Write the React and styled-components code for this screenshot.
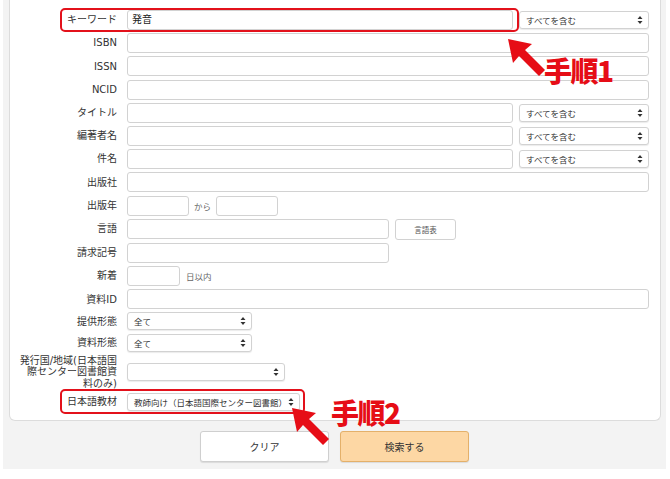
import styled, { createGlobalStyle } from "styled-components";

const GlobalStyle = createGlobalStyle`
  body {
    margin: 0;
    background: #fff;
    font-family: "DejaVu Sans", "Noto Sans CJK JP", sans-serif;
    color: #333;
  }
`;

const Page = styled.div`
  position: relative;
  margin-left: 3px;
  width: 663px;
  height: 469px;
  background: #f3f3f3;
  overflow: hidden;
`;

const Panel = styled.div`
  margin-left: 6px;
  width: 652px;
  box-sizing: border-box;
  background: #fff;
  border: 1px solid #dcdcdc;
  border-top: none;
  border-radius: 0 0 6px 6px;
  padding: 10px 11px 9px 8px;
  display: flex;
  flex-direction: column;
  gap: 3.2px;
`;

const Row = styled.div`
  position: relative;
  display: flex;
  align-items: center;
  gap: 10px;
`;

const Label = styled.div`
  width: 99px;
  flex: none;
  text-align: right;
  font-size: 10px;
  line-height: 11.5px;
  color: #333;
`;

const Controls = styled.div`
  flex: 1;
  display: flex;
  align-items: center;
  gap: ${(p) => p.$gap || 6}px;
`;

const Input = styled.div`
  box-sizing: border-box;
  height: 20px;
  width: ${(p) => (p.$w ? `${p.$w}px` : "auto")};
  flex: ${(p) => (p.$w ? "none" : "1")};
  border: 1px solid #d2d2d2;
  border-radius: 3px;
  background: #fff;
  padding: 0 4px;
  font-size: 10px;
  line-height: 18px;
  color: #222;
`;

const Select = styled.div`
  box-sizing: border-box;
  height: 18px;
  width: ${(p) => p.$w}px;
  flex: none;
  border: 1px solid #d2d2d2;
  border-radius: 3px;
  box-shadow: 0 1px 1px rgba(0, 0, 0, 0.08);
  background: #fff;
  display: flex;
  align-items: center;
  justify-content: space-between;
  padding: 0 5px 0 6px;
  font-size: 8.5px;
  color: #333;
  white-space: nowrap;
`;

const Note = styled.span`
  font-size: 8.5px;
  color: #666;
`;

const SmallButton = styled.div`
  box-sizing: border-box;
  width: 61px;
  height: 21px;
  border: 1px solid #d2d2d2;
  border-radius: 3px;
  background: #fff;
  font-size: 7.5px;
  color: #555;
  display: flex;
  align-items: center;
  justify-content: center;
`;

const Highlight = styled.div`
  position: absolute;
  left: 42px;
  top: ${(p) => p.$top}px;
  bottom: ${(p) => p.$bottom}px;
  width: ${(p) => p.$w}px;
  border: 2px solid #e3111b;
  border-radius: 5px;
  box-sizing: border-box;
  pointer-events: none;
`;

const ButtonBar = styled.div`
  display: flex;
  justify-content: center;
  gap: 11px;
  margin-top: 10px;
`;

const Button = styled.div`
  box-sizing: border-box;
  width: 129px;
  height: 31px;
  border-radius: 3px;
  border: 1px solid ${(p) => (p.$primary ? "#e4b06a" : "#cfcfcf")};
  background: ${(p) => (p.$primary ? "#fdd7a4" : "#fff")};
  box-shadow: 0 1px 1px rgba(0, 0, 0, 0.1);
  font-size: 10px;
  color: #333;
  display: flex;
  align-items: center;
  justify-content: center;
`;

const StepText = styled.div`
  position: absolute;
  left: ${(p) => p.$x}px;
  top: ${(p) => p.$y}px;
  font-family: "Noto Sans CJK JP", sans-serif;
  font-weight: 900;
  font-size: 28px;
  line-height: 30px;
  color: #e60d16;
  letter-spacing: -1.5px;
`;

const ArrowWrap = styled.div`
  position: absolute;
  left: ${(p) => p.$x}px;
  top: ${(p) => p.$y}px;
  width: 40px;
  height: 40px;
`;

const Arrows = () => (
  <svg width="6" height="10" viewBox="0 0 6 10">
    <path d="M3 1 L5.5 4 H0.5 Z M3 9 L5.5 6 H0.5 Z" fill="#333" />
  </svg>
);

const Arrow = ({ x, y }) => (
  <ArrowWrap $x={x} $y={y}>
    <svg width="40" height="40" viewBox="0 0 40 40">
      <polygon
        points="1,1 25,6 18,12 38,32 32,38 12,18 6,25"
        fill="#e60d16"
      />
    </svg>
  </ArrowWrap>
);

const SelectBox = ({ w, children }) => (
  <Select $w={w}>
    <span>{children}</span>
    <Arrows />
  </Select>
);

const App = () => {
  return (
    <>
      <GlobalStyle />
      <Page>
        <Panel>
          <Row>
            <Label>キーワード</Label>
            <Controls>
              <Input>発音</Input>
              <SelectBox w={130}>すべてを含む</SelectBox>
            </Controls>
            <Highlight $top={-2} $bottom={-2} $w={459} />
          </Row>
          <Row>
            <Label>ISBN</Label>
            <Input />
          </Row>
          <Row>
            <Label>ISSN</Label>
            <Input />
          </Row>
          <Row>
            <Label>NCID</Label>
            <Input />
          </Row>
          <Row>
            <Label>タイトル</Label>
            <Controls>
              <Input />
              <SelectBox w={130}>すべてを含む</SelectBox>
            </Controls>
          </Row>
          <Row>
            <Label>編著者名</Label>
            <Controls>
              <Input />
              <SelectBox w={130}>すべてを含む</SelectBox>
            </Controls>
          </Row>
          <Row>
            <Label>件名</Label>
            <Controls>
              <Input />
              <SelectBox w={130}>すべてを含む</SelectBox>
            </Controls>
          </Row>
          <Row>
            <Label>出版社</Label>
            <Input />
          </Row>
          <Row>
            <Label>出版年</Label>
            <Controls $gap={5}>
              <Input $w={62} />
              <Note>から</Note>
              <Input $w={62} />
            </Controls>
          </Row>
          <Row>
            <Label>言語</Label>
            <Controls>
              <Input $w={262} />
              <SmallButton>言語表</SmallButton>
            </Controls>
          </Row>
          <Row>
            <Label>請求記号</Label>
            <Controls>
              <Input $w={262} />
            </Controls>
          </Row>
          <Row>
            <Label>新着</Label>
            <Controls>
              <Input $w={53} />
              <Note>日以内</Note>
            </Controls>
          </Row>
          <Row>
            <Label>資料ID</Label>
            <Input />
          </Row>
          <Row>
            <Label>提供形態</Label>
            <Controls>
              <SelectBox w={125}>全て</SelectBox>
            </Controls>
          </Row>
          <Row>
            <Label>資料形態</Label>
            <Controls>
              <SelectBox w={125}>全て</SelectBox>
            </Controls>
          </Row>
          <Row>
            <Label>発行国/地域(日本語国際センター図書館資料のみ)</Label>
            <Controls>
              <SelectBox w={158} />
            </Controls>
          </Row>
          <Row>
            <Label>日本語教材</Label>
            <Controls>
              <SelectBox w={173}>教師向け（日本語国際センター図書館）</SelectBox>
            </Controls>
            <Highlight $top={-4} $bottom={-3} $w={245} />
          </Row>
        </Panel>
        <ButtonBar>
          <Button>クリア</Button>
          <Button $primary>検索する</Button>
        </ButtonBar>
        <Arrow x={504} y={38} />
        <StepText $x={541} $y={55}>手順1</StepText>
        <Arrow x={288} y={407} />
        <StepText $x={328} $y={397}>手順2</StepText>
      </Page>
    </>
  );
};

export default App;
